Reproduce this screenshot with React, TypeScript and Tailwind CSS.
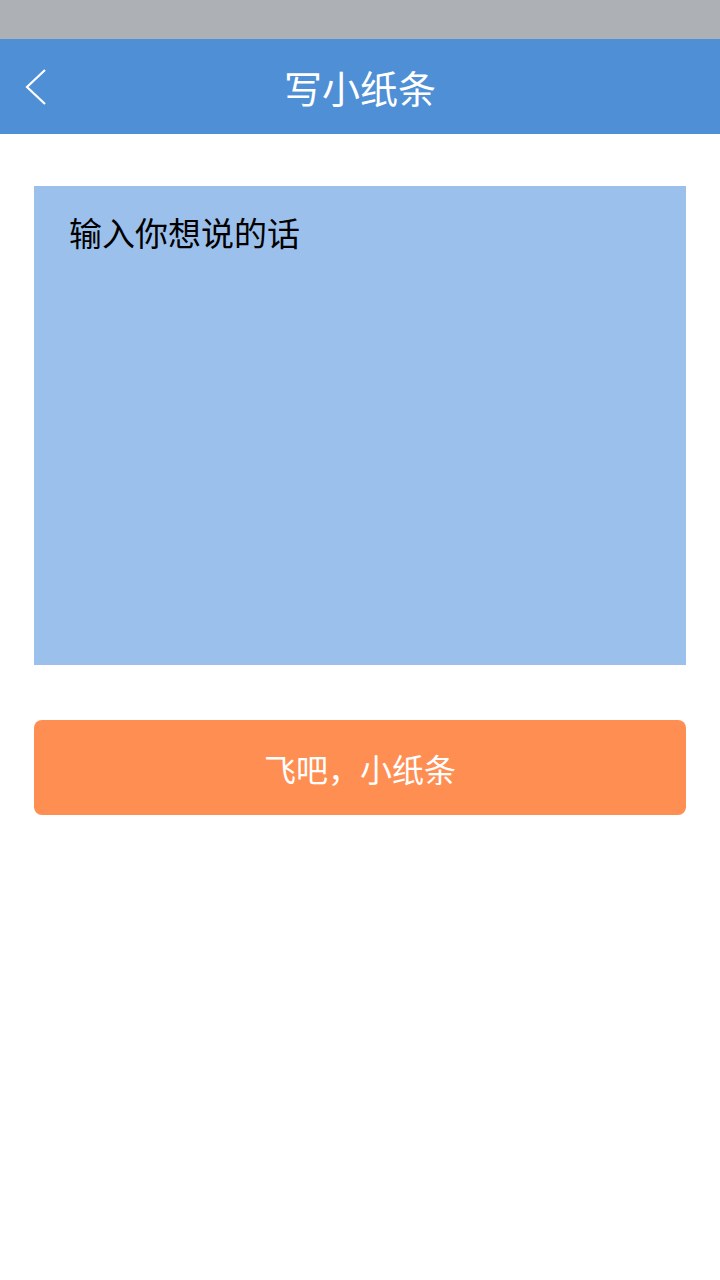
export default function App() {
  return (
    <div className="min-h-[1280px] w-[720px] bg-white font-['Noto_Sans_CJK_SC',sans-serif]">
      <div className="h-[39px] bg-[#adb0b5]" />
      <header className="relative flex h-[95px] items-center justify-center bg-[#4f8fd6]">
        <button className="absolute left-[24px] top-[29px] text-white">
          <svg width="24" height="38" viewBox="0 0 24 38" fill="none" stroke="currentColor" strokeWidth="2.2">
            <polyline points="21,2 3,19 21,36" />
          </svg>
        </button>
        <h1 className="text-[38px] font-normal leading-none text-white">写小纸条</h1>
      </header>
      <div className="px-[34px] pt-[52px]">
        <textarea
          placeholder="输入你想说的话"
          className="block h-[479px] w-full resize-none bg-[#9cc0ec] px-[35px] pt-[26px] pb-[29px] text-[33px] leading-[40px] text-black outline-none placeholder:text-black"
        />
        <button className="mt-[55px] flex h-[95px] w-full items-center justify-center rounded-[8px] bg-[#ff8e53] text-[32px] text-white">
          飞吧，小纸条
        </button>
      </div>
    </div>
  )
}
